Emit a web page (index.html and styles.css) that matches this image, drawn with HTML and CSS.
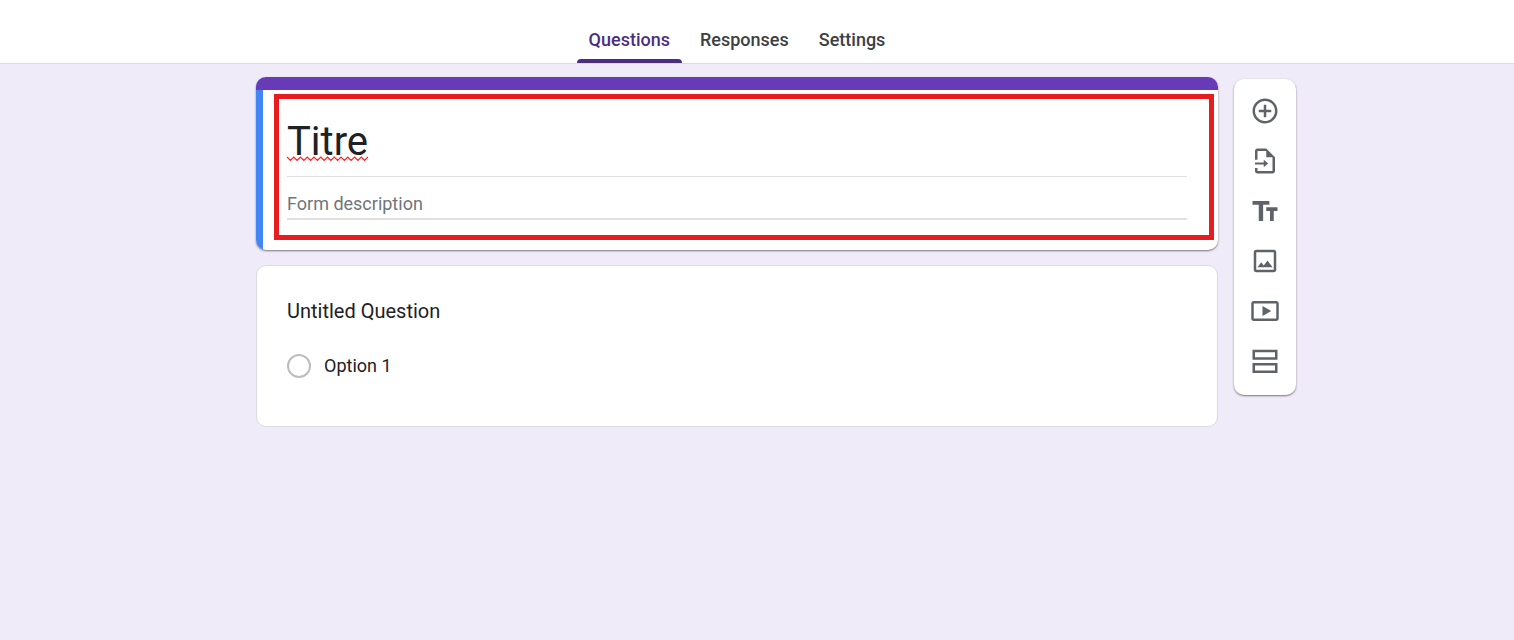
FILE: index.html
```
<!DOCTYPE html>
<html lang="en">
<head>
	<meta charset="UTF-8">
	<meta name="viewport" content="width=device-width, initial-scale=1">
	<title>Titre</title>
	<link rel="stylesheet" href="styles.css">
</head>
<body>
	<header class="header">
		<nav class="tabs">
			<a href="#questions" class="tab active">Questions</a>
			<a href="#responses" class="tab">Responses</a>
			<a href="#settings" class="tab">Settings</a>
		</nav>
	</header>
	<main class="editor">
		<div class="form">
			<section class="card title-card">
				<div class="highlight">
					<input class="title" type="text" value="Titre" aria-label="Form title" spellcheck="false">
					<input class="description" type="text" placeholder="Form description" aria-label="Form description">
				</div>
			</section>
			<section class="card question">
				<h2>Untitled Question</h2>
				<label class="option">
					<input type="radio" name="q1">
					<span>Option 1</span>
				</label>
			</section>
		</div>
		<aside class="toolbar">
			<button type="button" aria-label="Add question">
				<svg viewBox="0 0 24 24"><path d="M13 7h-2v4H7v2h4v4h2v-4h4v-2h-4V7zm-1-5C6.490 2 2 6.490 2 12s4.490 10 10 10 10-4.490 10-10S17.510 2 12 2zm0 18c-4.410 0-8-3.590-8-8s3.590-8 8-8 8 3.590 8 8-3.590 8-8 8z"/></svg>
			</button>
			<button type="button" aria-label="Import questions">
				<svg viewBox="0 0 24 24"><path d="M13 2H6c-1.100 0-2 .9-2 2v7h2V4h7v5h5v11H6v-2.500H4V20c0 1.100.9 2 2 2h12c1.100 0 2-.9 2-2V9l-7-7z"/><path d="M4 13.200h7V11l3.500 3L11 17v-2.200H4z"/></svg>
			</button>
			<button type="button" aria-label="Add title and description">
				<svg viewBox="0 0 24 24"><path d="M2 4v3h5v13h3.500V7h5V4H2zm20 5h-9v3h3v8h3v-8h3V9z"/></svg>
			</button>
			<button type="button" aria-label="Add image">
				<svg viewBox="0 0 24 24"><path d="M19 3H5c-1.100 0-2 .9-2 2v14c0 1.100.9 2 2 2h14c1.100 0 2-.9 2-2V5c0-1.100-.9-2-2-2zm0 16H5V5h14v14z"/><path d="M6 17l3-4 2 2.500 3-4 4 5.500z"/></svg>
			</button>
			<button type="button" aria-label="Add video">
				<svg viewBox="0 0 24 24"><path d="M10 8v8l7-4-7-4zm11-4H3c-1.100 0-2 .9-2 2v12c0 1.100.9 2 2 2h18c1.100 0 2-.9 2-2V6c0-1.100-.9-2-2-2zm0 14H3V6h18v12z"/></svg>
			</button>
			<button type="button" aria-label="Add section">
				<svg viewBox="0 0 24 24"><path d="M2 3v8h20V3H2zm18 6H4V5h16v4zM2 13.500v8h20v-8H2zm18 6H4v-4h16v4z"/></svg>
			</button>
		</aside>
	</main>
</body>
</html>
```
FILE: styles.css
```
*{
	margin: 0;
	padding: 0;
	box-sizing: border-box;
}
body{
	min-height: 100vh;
	background-color: #f0ebf8;
	font-family: Roboto, "Liberation Sans", sans-serif;
	color: #202124;
}
.header{
	padding-right: 40px;
	background-color: #fff;
	border-bottom: 1px solid #dadce0;
}
.tabs{
	display: flex;
	justify-content: center;
	gap: 6px;
	padding-top: 20px;
}
.tab{
	height: 43px;
	padding: 0 12px;
	font-size: 18px;
	font-weight: 500;
	line-height: 40px;
	color: #3c4043;
	text-decoration: none;
}
.tab.active{
	color: #4b2e83;
	position: relative;
}
.tab.active::after{
	content: "";
	position: absolute;
	left: 0;
	right: 0;
	bottom: 0;
	height: 4px;
	border-radius: 4px 4px 0 0;
	background-color: #4b2e83;
}
.editor{
	display: grid;
	grid-template-columns: 1fr minmax(0, 962px) 1fr;
	align-items: start;
	padding: 13px 40px 40px 0;
}
.form{
	grid-column: 2;
	display: flex;
	flex-direction: column;
	gap: 15px;
}
.card{
	background-color: #fff;
	border-radius: 10px;
}
.title-card{
	position: relative;
	overflow: hidden;
	padding: 17px 4px 10px 18px;
	box-shadow: 0 1px 2px rgba(0,0,0,0.5);
}
/* left bar marks the selected card */
.title-card::before{
	content: "";
	position: absolute;
	top: 0;
	left: 0;
	bottom: 0;
	width: 7px;
	background-color: #4285f4;
}
.title-card::after{
	content: "";
	position: absolute;
	top: 0;
	left: 0;
	right: 0;
	height: 13px;
	background-color: #673ab7;
}
.highlight{
	padding: 13px 22px 15px 8px;
	border: 5px solid #e61c1f;
}
.highlight input{
	display: block;
	width: 100%;
	border: none;
	outline: none;
	background: none;
	font-family: inherit;
	color: #202124;
}
.highlight .title{
	height: 65px;
	padding-bottom: 6px;
	border-bottom: 1px solid #e0e0e0;
	font-size: 40px;
	/* spelling mark under the title */
	background: url("data:image/svg+xml,%3Csvg xmlns='http://www.w3.org/2000/svg' width='81' height='6'%3E%3Cpath d='M0 1l3.375 3.500 3.375-3.500 3.375 3.500 3.375-3.500 3.375 3.500 3.375-3.500 3.375 3.500 3.375-3.500 3.375 3.500 3.375-3.500 3.375 3.500 3.375-3.500 3.375 3.500 3.375-3.500 3.375 3.500 3.375-3.500 3.375 3.500 3.375-3.500 3.375 3.500 3.375-3.500 3.375 3.500 3.375-3.500 3.375 3.500 3.375-3.500' fill='none' stroke='%23ff2020' stroke-width='1.200'/%3E%3C/svg%3E") no-repeat 0 44px;
}
.highlight .description{
	height: 43px;
	padding-top: 11px;
	border-bottom: 2px solid #e0e0e0;
	font-size: 18px;
}
.description::placeholder{
	color: #70757a;
}
.question{
	padding: 30px 30px 48px;
	border: 1px solid #dadce0;
}
.question h2{
	font-size: 20px;
	font-weight: 400;
	line-height: 30px;
}
.option{
	display: flex;
	align-items: center;
	gap: 13px;
	margin-top: 28px;
	font-size: 18px;
	line-height: 24px;
}
.option input{
	appearance: none;
	width: 24px;
	height: 24px;
	border: 2px solid #bdbdbd;
	border-radius: 50%;
}
.toolbar{
	justify-self: start;
	display: flex;
	flex-direction: column;
	width: 62px;
	margin: 2px 0 0 16px;
	padding: 7px 0 9px;
	border-radius: 10px;
	background-color: #fff;
	box-shadow: 0 1px 2px rgba(0,0,0,0.5);
}
.toolbar button{
	display: flex;
	align-items: center;
	justify-content: center;
	height: 50px;
	border: none;
	background: none;
	cursor: pointer;
}
.toolbar svg{
	width: 30px;
	height: 30px;
	fill: #5f6368;
}
```
